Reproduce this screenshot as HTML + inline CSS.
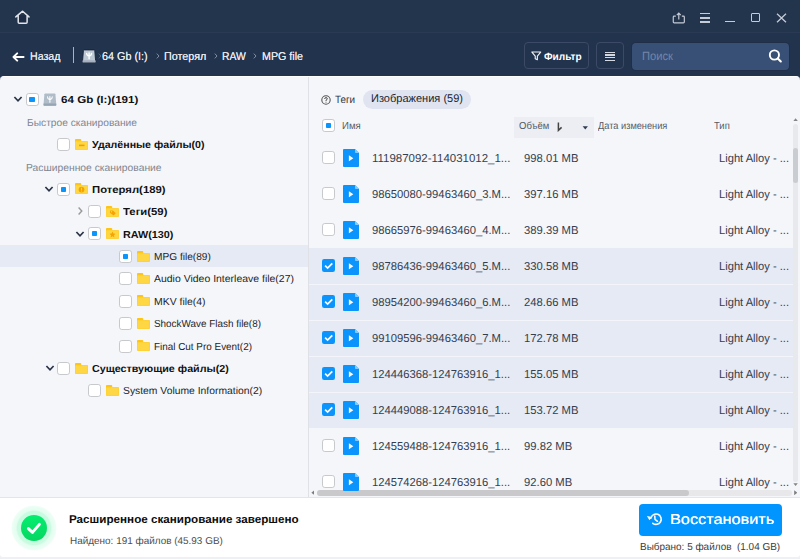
<!DOCTYPE html>
<html><head><meta charset="utf-8">
<style>
*{box-sizing:border-box;margin:0;padding:0}
html,body{width:800px;height:559px;overflow:hidden;background:#eff0f3;font-family:"Liberation Sans",sans-serif;}
.abs{position:absolute}
#app{position:absolute;left:0;top:0;width:800px;height:559px;overflow:hidden}
#dark{position:absolute;left:0;top:0;width:800px;height:120px;background:#22334d}
#title{position:absolute;left:0;top:0;width:800px;height:33px;background:#23344d;border-bottom:1px solid #2b3a54}
.t{position:absolute;white-space:pre;line-height:1;transform-origin:0 50%;text-rendering:geometricPrecision}
.b{font-weight:bold}
#panel{position:absolute;left:0;top:75.8px;width:800px;height:422px;background:#f5f6fa;border-radius:4px 4px 0 0;border-top:1.4px solid #fdfdfe}
#vdiv{position:absolute;left:308px;top:77px;width:1px;height:420px;background:#dfe1e6}
#bottom{position:absolute;left:0;top:497px;width:799.5px;height:60px;background:#fff;border-top:1px solid #e3e5e8;border-radius:0 0 3px 3px}
.cb{position:absolute;width:13px;height:13px;border:1.2px solid #c8c9cd;border-radius:2.8px;background:#fff}
.cb.p::after{content:"";position:absolute;left:2.8px;top:2.8px;width:5.2px;height:5.2px;background:#0b95fc;border-radius:0.8px}
.cb.c{background:#1890ff;border-color:#1890ff}
.cb.c::after{content:"";position:absolute;left:3.3px;top:0.2px;width:3.6px;height:7px;border:solid #fff;border-width:0 2px 2px 0;transform:rotate(43deg)}
.hl{position:absolute;background:#e6eaf4}
.btn{position:absolute;border:1.2px solid #3c4a67;border-radius:4px}
</style></head><body>
<div id="app">
<div id="dark"></div>
<div id="title"></div>

<!-- title bar icons -->
<svg class="abs" style="left:14px;top:9px" width="18" height="16" viewBox="0 0 18 16"><path d="M4.2 6.2 L4.2 13.3 Q4.2 14.3 5.2 14.3 L12.1 14.3 Q13.1 14.3 13.1 13.3 L13.1 6.2 Z" fill="#1d2b45"/><path d="M1.8 7.9 L8.65 2.2 L15 7.9 M4.2 6.4 L4.2 13.3 Q4.2 14.3 5.2 14.3 L12.1 14.3 Q13.1 14.3 13.1 13.3 L13.1 6.4" fill="none" stroke="#e1e4eb" stroke-width="1.5" stroke-linejoin="round" stroke-linecap="round"/></svg>
<svg class="abs" style="left:671.8px;top:12px" width="13.6" height="11.8" viewBox="0 0 15 13"><path d="M4.2 4.6 L2.4 4.6 Q1.4 4.6 1.4 5.6 L1.4 11 Q1.4 12 2.4 12 L12.6 12 Q13.6 12 13.6 11 L13.6 5.6 Q13.6 4.6 12.6 4.6 L10.8 4.6" fill="none" stroke="#c6ccd7" stroke-width="1.3"/><path d="M7.5 8.4 L7.5 1.4 M5.3 3.4 L7.5 1.1 L9.7 3.4" fill="none" stroke="#c6ccd7" stroke-width="1.3"/></svg>
<div class="abs" style="left:699.5px;top:12.8px;width:10px;height:1.5px;background:#c6ccd7"></div>
<div class="abs" style="left:699.5px;top:17px;width:10px;height:1.5px;background:#c6ccd7"></div>
<div class="abs" style="left:699.5px;top:21.3px;width:10px;height:1.5px;background:#c6ccd7"></div>
<div class="abs" style="left:725px;top:20.5px;width:10.3px;height:1.4px;background:#c6ccd7"></div>
<div class="abs" style="left:751.4px;top:13.2px;width:8.8px;height:8.7px;border:1.4px solid #c6ccd7;border-radius:1px"></div>
<svg class="abs" style="left:776px;top:13px" width="11" height="10" viewBox="0 0 11 10"><path d="M1 0.8 L10 9.2 M10 0.8 L1 9.2" stroke="#c6ccd7" stroke-width="1.3" fill="none"/></svg>

<!-- toolbar -->
<svg class="abs" style="left:11.5px;top:52px" width="13" height="10" viewBox="0 0 13 10"><path d="M11.6 5 L2 5 M5.2 1.3 L1.5 5 L5.2 8.7" fill="none" stroke="#fff" stroke-width="1.9" stroke-linecap="round" stroke-linejoin="round"/></svg>
<div class="abs" style="left:72.5px;top:47px;width:1.2px;height:15.5px;background:#aab1c0"></div>
<svg class="abs" style="left:97.5px;top:53px" width="4" height="6" viewBox="0 0 4 6"><path d="M0.8 0.6 L3 3 L0.8 5.4" fill="none" stroke="#5f6c85" stroke-width="0.9"/></svg>
<svg class="abs" style="left:155.6px;top:53px" width="4" height="6" viewBox="0 0 4 6"><path d="M0.8 0.6 L3 3 L0.8 5.4" fill="none" stroke="#8c97ad" stroke-width="0.9"/></svg>
<svg class="abs" style="left:214px;top:53px" width="4" height="6" viewBox="0 0 4 6"><path d="M0.8 0.6 L3 3 L0.8 5.4" fill="none" stroke="#8c97ad" stroke-width="0.9"/></svg>
<svg class="abs" style="left:253.4px;top:53px" width="4" height="6" viewBox="0 0 4 6"><path d="M0.8 0.6 L3 3 L0.8 5.4" fill="none" stroke="#8c97ad" stroke-width="0.9"/></svg>

<div class="btn" style="left:524px;top:42.3px;width:64.7px;height:26.9px"></div>
<svg class="abs" style="left:531px;top:50.5px" width="10.6" height="10" viewBox="0 0 12 11"><path d="M1 1 L11 1 L7.2 5.6 L7.2 9.8 L4.8 8.6 L4.8 5.6 Z" fill="none" stroke="#eef1f6" stroke-width="1.3" stroke-linejoin="round"/></svg>
<div class="btn" style="left:596.3px;top:42.3px;width:27.3px;height:26.9px"></div>
<div class="abs" style="left:605px;top:51.5px;width:10.2px;height:1.5px;background:#d3d8e1"></div>
<div class="abs" style="left:605px;top:54.2px;width:10.2px;height:1.5px;background:#d3d8e1"></div>
<div class="abs" style="left:605px;top:56.9px;width:10.2px;height:1.5px;background:#d3d8e1"></div>
<div class="abs" style="left:605px;top:59.6px;width:10.2px;height:1.5px;background:#d3d8e1"></div>
<div class="abs" style="left:632px;top:42.5px;width:157.4px;height:27px;background:#385075;border-radius:4px;box-shadow:0 0 0 1px #202e48"></div>
<svg class="abs" style="left:767px;top:48px" width="16" height="16" viewBox="0 0 16 16"><circle cx="7.4" cy="7" r="4.6" fill="none" stroke="#fff" stroke-width="1.9"/><path d="M10.8 10.4 L13.8 13.4" stroke="#fff" stroke-width="2.1" stroke-linecap="round"/></svg>

<div id="panel"></div>
<!-- highlights -->
<div class="hl" style="left:0;top:245px;width:308px;height:22px"></div>
<div class="hl" style="left:309px;top:248px;width:484px;height:180px"></div>
<div class="abs" style="left:309px;top:283.5px;width:484px;height:1px;background:#f3f5fa"></div>
<div class="abs" style="left:309px;top:319.5px;width:484px;height:1px;background:#f3f5fa"></div>
<div class="abs" style="left:309px;top:355.5px;width:484px;height:1px;background:#f3f5fa"></div>
<div class="abs" style="left:309px;top:391.5px;width:484px;height:1px;background:#f3f5fa"></div>
<div id="vdiv"></div>

<!-- tabs/header -->
<div class="abs" style="left:363px;top:89.5px;width:108px;height:19px;border-radius:9.5px;background:#e0e4f1"></div>
<svg class="abs" style="left:320.8px;top:94.9px" width="10" height="10" viewBox="0 0 10 10"><circle cx="5" cy="5" r="4.2" fill="none" stroke="#555" stroke-width="1.1"/><path d="M3.7 4 Q3.7 2.6 5 2.6 Q6.3 2.6 6.3 3.8 Q6.3 4.6 5 5.2 L5 6" fill="none" stroke="#4a4a4a" stroke-width="1"/><rect x="4.5" y="6.7" width="1" height="1" fill="#666"/></svg>
<div class="abs" style="left:514px;top:116.5px;width:80px;height:21.5px;background:#eceef3"></div>
<svg class="abs" style="left:556px;top:121px" width="8" height="11" viewBox="0 0 8 11"><path d="M2.4 1.4 L2.4 9.4 L5.6 6.4" fill="none" stroke="#444" stroke-width="1.5"/></svg>
<svg class="abs" style="left:582.2px;top:126.3px" width="6.6" height="3.6" viewBox="0 0 8 5"><path d="M0.3 0.4 L7.7 0.4 L4 4.8 Z" fill="#2f3c55"/></svg>

<!-- scrollbars -->
<div class="abs" style="left:793px;top:124px;width:5px;height:357.5px;background:#e8e9ec;border-radius:2.5px"></div>
<div class="abs" style="left:793px;top:148px;width:5px;height:35.2px;background:#c9ccd1;border-radius:2.5px"></div>
<svg class="abs" style="left:793px;top:117.6px" width="5.2" height="3.2" viewBox="0 0 6 4"><path d="M0.2 3.8 L3 0.3 L5.8 3.8 Z" fill="#858585"/></svg>
<svg class="abs" style="left:793px;top:483.4px" width="5.2" height="3.2" viewBox="0 0 6 4"><path d="M0.2 0.2 L3 3.7 L5.8 0.2 Z" fill="#858585"/></svg>
<div class="abs" style="left:309px;top:488.5px;width:490px;height:8.5px;background:#f5f6fa"></div>
<div class="abs" style="left:317px;top:489.5px;width:475px;height:6.5px;background:#e8e8ea;border-radius:3.2px"></div>
<div class="abs" style="left:317px;top:489.5px;width:372px;height:6.5px;background:#c9c9cb;border-radius:3.2px"></div>
<svg class="abs" style="left:310.6px;top:489.8px" width="3.6" height="5.4" viewBox="0 0 4 6"><path d="M3.8 0.2 L0.4 3 L3.8 5.8 Z" fill="#7d7d7d"/></svg>
<svg class="abs" style="left:793.8px;top:489.8px" width="3.6" height="5.4" viewBox="0 0 4 6"><path d="M0.2 0.2 L3.6 3 L0.2 5.8 Z" fill="#7d7d7d"/></svg>

<div id="bottom"></div>
<!-- bottom bar -->
<div class="abs" style="left:10.7px;top:505.2px;width:46px;height:46px;border-radius:50%;background:radial-gradient(circle,#c4fbde 0,#c9fbe1 16.6px,#e4fdf0 18px,#ecfef5 21.6px,rgba(255,255,255,0) 23px)"></div>
<div class="abs" style="left:20.9px;top:515.4px;width:25.8px;height:25.8px;border-radius:50%;background:linear-gradient(175deg,#04ee70,#06d661)"></div>
<svg class="abs" style="left:26px;top:520.8px" width="16" height="14" viewBox="0 0 16 14"><path d="M2.4 7.6 L6.5 11.4 L13.4 3.4" fill="none" stroke="#fff" stroke-width="2.9" stroke-linecap="round" stroke-linejoin="round"/></svg>
<div class="abs" style="left:639px;top:503.5px;width:143px;height:32.5px;border-radius:4px;background:#0095ff"></div>
<svg class="abs" style="left:646px;top:511px" width="18" height="16" viewBox="0 0 18 16"><path d="M4.91 7.12 A5.2 5.2 0 1 1 6.80 12.30" fill="none" stroke="#fff" stroke-width="1.6" stroke-linecap="round"/><path d="M0.9 5.0 L6 5.9 L3.4 9.2 Z" fill="#fff"/><path d="M8.8 4.9 L9 8.4 L11.5 10.3" fill="none" stroke="#fff" stroke-width="1.5" stroke-linecap="round" stroke-linejoin="round"/></svg>

<svg class="abs" style="left:13px;top:94.19999999999999px" width="10" height="10" viewBox="0 0 10 10"><path d="M1.4 3 L5 6.8 L8.6 3" fill="none" stroke="#2a3448" stroke-width="1.7"/></svg>
<div class="cb p" style="left:25.6px;top:93px"></div>
<svg class="abs" style="left:43.2px;top:93.1px" width="13.8" height="13.3" viewBox="-0.5 -0.5 14 13.4"><path d="M1.6 0 L11.4 0 Q12 0 12.1 0.6 L13 11.4 Q13 12.4 12.2 12.4 L0.8 12.4 Q0 12.4 0 11.4 L0.9 0.6 Q1 0 1.6 0 Z" fill="#b0bdc9" /><path d="M0.15 10.2 L12.85 10.2 L13 11.4 Q13 12.4 12.2 12.4 L0.8 12.4 Q0 12.4 0 11.4 Z" fill="#96a5b4"/><path d="M6.5 3 L6.5 8.8 M4.1 3.4 Q4.1 5.6 6.5 6.2 Q8.9 5.6 8.9 3.4" fill="none" stroke="#fff" stroke-width="1.1" stroke-linecap="round"/></svg>
<svg class="abs" style="left:82.4px;top:49.3px" width="14.2" height="14.4" viewBox="-0.5 -0.5 14 13.4"><path d="M1.6 0 L11.4 0 Q12 0 12.1 0.6 L13 11.4 Q13 12.4 12.2 12.4 L0.8 12.4 Q0 12.4 0 11.4 L0.9 0.6 Q1 0 1.6 0 Z" fill="#bcc8d3" stroke="#18213a" stroke-width="0.9"/><path d="M0.15 10.2 L12.85 10.2 L13 11.4 Q13 12.4 12.2 12.4 L0.8 12.4 Q0 12.4 0 11.4 Z" fill="#a4b1be"/><path d="M6.5 3 L6.5 8.8 M4.1 3.4 Q4.1 5.6 6.5 6.2 Q8.9 5.6 8.9 3.4" fill="none" stroke="#fff" stroke-width="1.35" stroke-linecap="round"/></svg>
<div class="cb " style="left:57px;top:138px"></div>
<svg class="abs" style="left:74.5px;top:138.59999999999997px" width="13" height="11" viewBox="0 0 13 11"><path d="M0 0.8 Q0 0 0.8 0 L5.4 0 Q6.1 0 6.2 0.7 L6.3 3 L0 3 Z" fill="#ffc416"/><rect x="0" y="2" width="13" height="9" rx="0.9" fill="#ffce2a"/><rect x="0.6" y="2.6" width="11.8" height="7.8" rx="0.5" fill="#ffd745"/><rect x="4" y="5.6" width="5.5" height="1.6" fill="#f0a000"/></svg>
<svg class="abs" style="left:44px;top:184.2px" width="10" height="10" viewBox="0 0 10 10"><path d="M1.4 3 L5 6.8 L8.6 3" fill="none" stroke="#2a3448" stroke-width="1.7"/></svg>
<div class="cb p" style="left:57px;top:183px"></div>
<svg class="abs" style="left:74.5px;top:183.39999999999998px" width="13" height="11" viewBox="0 0 13 11"><path d="M0 0.8 Q0 0 0.8 0 L5.4 0 Q6.1 0 6.2 0.7 L6.3 3 L0 3 Z" fill="#ffc416"/><rect x="0" y="2" width="13" height="9" rx="0.9" fill="#ffce2a"/><rect x="0.6" y="2.6" width="11.8" height="7.8" rx="0.5" fill="#ffd745"/><circle cx="6.5" cy="6.6" r="2.9" fill="#f5a300"/><rect x="6.1" y="4.8" width="0.9" height="2.3" fill="#ffd55e"/><rect x="6.1" y="7.6" width="0.9" height="0.9" fill="#ffd55e"/></svg>
<svg class="abs" style="left:75.3px;top:206.2px" width="10" height="10" viewBox="0 0 10 10"><path d="M3.6 1.6 L6.8 5 L3.6 8.4" fill="none" stroke="#999" stroke-width="1.4"/></svg>
<div class="cb " style="left:88px;top:205px"></div>
<svg class="abs" style="left:105.7px;top:205.79999999999998px" width="13" height="11" viewBox="0 0 13 11"><path d="M0 0.8 Q0 0 0.8 0 L5.4 0 Q6.1 0 6.2 0.7 L6.3 3 L0 3 Z" fill="#ffc416"/><rect x="0" y="2" width="13" height="9" rx="0.9" fill="#ffce2a"/><rect x="0.6" y="2.6" width="11.8" height="7.8" rx="0.5" fill="#ffd745"/><path d="M4 4.5 L7 4.5 L9.8 7.3 L7.6 9.5 L4 6.8 Z" fill="#f5a300"/><circle cx="5.5" cy="5.8" r="0.7" fill="#ffd55e"/></svg>
<svg class="abs" style="left:75.3px;top:228.99999999999997px" width="10" height="10" viewBox="0 0 10 10"><path d="M1.4 3 L5 6.8 L8.6 3" fill="none" stroke="#2a3448" stroke-width="1.7"/></svg>
<div class="cb p" style="left:88px;top:227px"></div>
<svg class="abs" style="left:105.7px;top:228.19999999999996px" width="13" height="11" viewBox="0 0 13 11"><path d="M0 0.8 Q0 0 0.8 0 L5.4 0 Q6.1 0 6.2 0.7 L6.3 3 L0 3 Z" fill="#ffc416"/><rect x="0" y="2" width="13" height="9" rx="0.9" fill="#ffce2a"/><rect x="0.6" y="2.6" width="11.8" height="7.8" rx="0.5" fill="#ffd745"/><path d="M6.5 3.6 L7.4 5.6 L9.6 5.8 L7.9 7.2 L8.5 9.4 L6.5 8.2 L4.5 9.4 L5.1 7.2 L3.4 5.8 L5.6 5.6 Z" fill="#f5a300"/></svg>
<div class="cb p" style="left:119px;top:250px"></div>
<svg class="abs" style="left:136.9px;top:250.59999999999997px" width="13" height="11" viewBox="0 0 13 11"><path d="M0 0.8 Q0 0 0.8 0 L5.4 0 Q6.1 0 6.2 0.7 L6.3 3 L0 3 Z" fill="#ffc416"/><rect x="0" y="2" width="13" height="9" rx="0.9" fill="#ffce2a"/><rect x="0.6" y="2.6" width="11.8" height="7.8" rx="0.5" fill="#ffd745"/></svg>
<div class="cb " style="left:119px;top:272px"></div>
<svg class="abs" style="left:136.9px;top:272.99999999999994px" width="13" height="11" viewBox="0 0 13 11"><path d="M0 0.8 Q0 0 0.8 0 L5.4 0 Q6.1 0 6.2 0.7 L6.3 3 L0 3 Z" fill="#ffc416"/><rect x="0" y="2" width="13" height="9" rx="0.9" fill="#ffce2a"/><rect x="0.6" y="2.6" width="11.8" height="7.8" rx="0.5" fill="#ffd745"/></svg>
<div class="cb " style="left:119px;top:295px"></div>
<svg class="abs" style="left:136.9px;top:295.4px" width="13" height="11" viewBox="0 0 13 11"><path d="M0 0.8 Q0 0 0.8 0 L5.4 0 Q6.1 0 6.2 0.7 L6.3 3 L0 3 Z" fill="#ffc416"/><rect x="0" y="2" width="13" height="9" rx="0.9" fill="#ffce2a"/><rect x="0.6" y="2.6" width="11.8" height="7.8" rx="0.5" fill="#ffd745"/></svg>
<div class="cb " style="left:119px;top:317px"></div>
<svg class="abs" style="left:136.9px;top:317.8px" width="13" height="11" viewBox="0 0 13 11"><path d="M0 0.8 Q0 0 0.8 0 L5.4 0 Q6.1 0 6.2 0.7 L6.3 3 L0 3 Z" fill="#ffc416"/><rect x="0" y="2" width="13" height="9" rx="0.9" fill="#ffce2a"/><rect x="0.6" y="2.6" width="11.8" height="7.8" rx="0.5" fill="#ffd745"/></svg>
<div class="cb " style="left:119px;top:340px"></div>
<svg class="abs" style="left:136.9px;top:340.2px" width="13" height="11" viewBox="0 0 13 11"><path d="M0 0.8 Q0 0 0.8 0 L5.4 0 Q6.1 0 6.2 0.7 L6.3 3 L0 3 Z" fill="#ffc416"/><rect x="0" y="2" width="13" height="9" rx="0.9" fill="#ffce2a"/><rect x="0.6" y="2.6" width="11.8" height="7.8" rx="0.5" fill="#ffd745"/></svg>
<svg class="abs" style="left:44.5px;top:363.4px" width="10" height="10" viewBox="0 0 10 10"><path d="M1.4 3 L5 6.8 L8.6 3" fill="none" stroke="#2a3448" stroke-width="1.7"/></svg>
<div class="cb " style="left:57px;top:362px"></div>
<svg class="abs" style="left:74.5px;top:362.59999999999997px" width="13" height="11" viewBox="0 0 13 11"><path d="M0 0.8 Q0 0 0.8 0 L5.4 0 Q6.1 0 6.2 0.7 L6.3 3 L0 3 Z" fill="#ffc416"/><rect x="0" y="2" width="13" height="9" rx="0.9" fill="#ffce2a"/><rect x="0.6" y="2.6" width="11.8" height="7.8" rx="0.5" fill="#ffd745"/></svg>
<div class="cb " style="left:88px;top:384px"></div>
<svg class="abs" style="left:106px;top:384.99999999999994px" width="13" height="11" viewBox="0 0 13 11"><path d="M0 0.8 Q0 0 0.8 0 L5.4 0 Q6.1 0 6.2 0.7 L6.3 3 L0 3 Z" fill="#ffc416"/><rect x="0" y="2" width="13" height="9" rx="0.9" fill="#ffce2a"/><rect x="0.6" y="2.6" width="11.8" height="7.8" rx="0.5" fill="#ffd745"/></svg>
<div class="cb " style="left:321.9px;top:151.25px"></div>
<svg class="abs" style="left:343px;top:149.2px" width="16" height="18" viewBox="0 0 16 18"><path d="M1 0 L12 0 L16 4 L16 17 Q16 18 15 18 L1 18 Q0 18 0 17 L0 1 Q0 0 1 0 Z" fill="#0b95fc"/><path d="M12 0 L16 4 L12.8 4 Q12 4 12 3.2 Z" fill="#86c9fe"/><path d="M5.9 6.3 L10.3 9.3 L5.9 12.3 Z" fill="#fff"/></svg>
<div class="cb " style="left:321.9px;top:187.25px"></div>
<svg class="abs" style="left:343px;top:185.2px" width="16" height="18" viewBox="0 0 16 18"><path d="M1 0 L12 0 L16 4 L16 17 Q16 18 15 18 L1 18 Q0 18 0 17 L0 1 Q0 0 1 0 Z" fill="#0b95fc"/><path d="M12 0 L16 4 L12.8 4 Q12 4 12 3.2 Z" fill="#86c9fe"/><path d="M5.9 6.3 L10.3 9.3 L5.9 12.3 Z" fill="#fff"/></svg>
<div class="cb " style="left:321.9px;top:223.25px"></div>
<svg class="abs" style="left:343px;top:221.2px" width="16" height="18" viewBox="0 0 16 18"><path d="M1 0 L12 0 L16 4 L16 17 Q16 18 15 18 L1 18 Q0 18 0 17 L0 1 Q0 0 1 0 Z" fill="#0b95fc"/><path d="M12 0 L16 4 L12.8 4 Q12 4 12 3.2 Z" fill="#86c9fe"/><path d="M5.9 6.3 L10.3 9.3 L5.9 12.3 Z" fill="#fff"/></svg>
<svg class="abs" style="left:321.9px;top:259.25px" width="13" height="13" viewBox="0 0 13 13"><rect x="0" y="0" width="13" height="13" rx="2.2" fill="#0b95fc"/><path d="M3.1 6.7 L5.6 9.1 L10.3 4.3" fill="none" stroke="#fff" stroke-width="1.7"/></svg>
<svg class="abs" style="left:343px;top:257.2px" width="16" height="18" viewBox="0 0 16 18"><path d="M1 0 L12 0 L16 4 L16 17 Q16 18 15 18 L1 18 Q0 18 0 17 L0 1 Q0 0 1 0 Z" fill="#0b95fc"/><path d="M12 0 L16 4 L12.8 4 Q12 4 12 3.2 Z" fill="#86c9fe"/><path d="M5.9 6.3 L10.3 9.3 L5.9 12.3 Z" fill="#fff"/></svg>
<svg class="abs" style="left:321.9px;top:295.25px" width="13" height="13" viewBox="0 0 13 13"><rect x="0" y="0" width="13" height="13" rx="2.2" fill="#0b95fc"/><path d="M3.1 6.7 L5.6 9.1 L10.3 4.3" fill="none" stroke="#fff" stroke-width="1.7"/></svg>
<svg class="abs" style="left:343px;top:293.2px" width="16" height="18" viewBox="0 0 16 18"><path d="M1 0 L12 0 L16 4 L16 17 Q16 18 15 18 L1 18 Q0 18 0 17 L0 1 Q0 0 1 0 Z" fill="#0b95fc"/><path d="M12 0 L16 4 L12.8 4 Q12 4 12 3.2 Z" fill="#86c9fe"/><path d="M5.9 6.3 L10.3 9.3 L5.9 12.3 Z" fill="#fff"/></svg>
<svg class="abs" style="left:321.9px;top:331.25px" width="13" height="13" viewBox="0 0 13 13"><rect x="0" y="0" width="13" height="13" rx="2.2" fill="#0b95fc"/><path d="M3.1 6.7 L5.6 9.1 L10.3 4.3" fill="none" stroke="#fff" stroke-width="1.7"/></svg>
<svg class="abs" style="left:343px;top:329.2px" width="16" height="18" viewBox="0 0 16 18"><path d="M1 0 L12 0 L16 4 L16 17 Q16 18 15 18 L1 18 Q0 18 0 17 L0 1 Q0 0 1 0 Z" fill="#0b95fc"/><path d="M12 0 L16 4 L12.8 4 Q12 4 12 3.2 Z" fill="#86c9fe"/><path d="M5.9 6.3 L10.3 9.3 L5.9 12.3 Z" fill="#fff"/></svg>
<svg class="abs" style="left:321.9px;top:367.25px" width="13" height="13" viewBox="0 0 13 13"><rect x="0" y="0" width="13" height="13" rx="2.2" fill="#0b95fc"/><path d="M3.1 6.7 L5.6 9.1 L10.3 4.3" fill="none" stroke="#fff" stroke-width="1.7"/></svg>
<svg class="abs" style="left:343px;top:365.2px" width="16" height="18" viewBox="0 0 16 18"><path d="M1 0 L12 0 L16 4 L16 17 Q16 18 15 18 L1 18 Q0 18 0 17 L0 1 Q0 0 1 0 Z" fill="#0b95fc"/><path d="M12 0 L16 4 L12.8 4 Q12 4 12 3.2 Z" fill="#86c9fe"/><path d="M5.9 6.3 L10.3 9.3 L5.9 12.3 Z" fill="#fff"/></svg>
<svg class="abs" style="left:321.9px;top:403.25px" width="13" height="13" viewBox="0 0 13 13"><rect x="0" y="0" width="13" height="13" rx="2.2" fill="#0b95fc"/><path d="M3.1 6.7 L5.6 9.1 L10.3 4.3" fill="none" stroke="#fff" stroke-width="1.7"/></svg>
<svg class="abs" style="left:343px;top:401.2px" width="16" height="18" viewBox="0 0 16 18"><path d="M1 0 L12 0 L16 4 L16 17 Q16 18 15 18 L1 18 Q0 18 0 17 L0 1 Q0 0 1 0 Z" fill="#0b95fc"/><path d="M12 0 L16 4 L12.8 4 Q12 4 12 3.2 Z" fill="#86c9fe"/><path d="M5.9 6.3 L10.3 9.3 L5.9 12.3 Z" fill="#fff"/></svg>
<div class="cb " style="left:321.9px;top:439.25px"></div>
<svg class="abs" style="left:343px;top:437.2px" width="16" height="18" viewBox="0 0 16 18"><path d="M1 0 L12 0 L16 4 L16 17 Q16 18 15 18 L1 18 Q0 18 0 17 L0 1 Q0 0 1 0 Z" fill="#0b95fc"/><path d="M12 0 L16 4 L12.8 4 Q12 4 12 3.2 Z" fill="#86c9fe"/><path d="M5.9 6.3 L10.3 9.3 L5.9 12.3 Z" fill="#fff"/></svg>
<div class="cb " style="left:321.9px;top:475.25px"></div>
<svg class="abs" style="left:343px;top:473.2px" width="16" height="18" viewBox="0 0 16 18"><path d="M1 0 L12 0 L16 4 L16 17 Q16 18 15 18 L1 18 Q0 18 0 17 L0 1 Q0 0 1 0 Z" fill="#0b95fc"/><path d="M12 0 L16 4 L12.8 4 Q12 4 12 3.2 Z" fill="#86c9fe"/><path d="M5.9 6.3 L10.3 9.3 L5.9 12.3 Z" fill="#fff"/></svg>
<div class="cb p" style="left:322.4px;top:119.3px"></div>
<span class="t" style="left:29.6px;top:52.0px;font-size:11.4px;color:#e4e8ef;transform:scaleX(0.931);text-shadow:0 0 0.3px #e4e8ef;">Назад</span>
<span class="t" style="left:102.0px;top:52.0px;font-size:11.4px;color:#e4e8ef;transform:scaleX(0.948);text-shadow:0 0 0.3px #e4e8ef;">64 Gb (I:)</span>
<span class="t" style="left:163.6px;top:52.0px;font-size:11.4px;color:#e4e8ef;transform:scaleX(0.946);text-shadow:0 0 0.3px #e4e8ef;">Потерял</span>
<span class="t" style="left:221.5px;top:52.0px;font-size:11.4px;color:#e4e8ef;transform:scaleX(0.910);text-shadow:0 0 0.3px #e4e8ef;">RAW</span>
<span class="t" style="left:261.5px;top:52.0px;font-size:11.4px;color:#e4e8ef;transform:scaleX(0.939);text-shadow:0 0 0.3px #e4e8ef;">MPG file</span>
<span class="t b" style="left:543.8px;top:53.0px;font-size:10.4px;color:#ffffff;transform:scaleX(0.970);">Фильтр</span>
<span class="t" style="left:641.5px;top:50.0px;font-size:12px;color:#7486a8;transform:scaleX(0.932);">Поиск</span>
<span class="t b" style="left:60.6px;top:96.0px;font-size:10.2px;color:#111;transform:scaleX(1.139);">64 Gb (I:)(191)</span>
<span class="t" style="left:27.0px;top:119.0px;font-size:10.2px;color:#80858f;transform:scaleX(1.003);">Быстрое сканирование</span>
<span class="t b" style="left:91.5px;top:141.0px;font-size:10.2px;color:#111;transform:scaleX(1.042);">Удалённые файлы(0)</span>
<span class="t" style="left:26.4px;top:164.0px;font-size:10.2px;color:#80858f;transform:scaleX(1.013);">Расширенное сканирование</span>
<span class="t b" style="left:91.5px;top:186.0px;font-size:10.2px;color:#111;transform:scaleX(1.110);">Потерял(189)</span>
<span class="t b" style="left:123.0px;top:208.0px;font-size:10.2px;color:#111;transform:scaleX(1.110);">Теги(59)</span>
<span class="t b" style="left:123.0px;top:231.0px;font-size:10.2px;color:#111;transform:scaleX(1.060);">RAW(130)</span>
<span class="t" style="left:153.8px;top:253.0px;font-size:10.2px;color:#1e1e1e;transform:scaleX(0.994);">MPG file(89)</span>
<span class="t" style="left:153.8px;top:275.0px;font-size:10.2px;color:#1e1e1e;transform:scaleX(1.027);">Audio Video Interleave file(27)</span>
<span class="t" style="left:153.8px;top:298.0px;font-size:10.2px;color:#1e1e1e;transform:scaleX(1.023);">MKV file(4)</span>
<span class="t" style="left:154.0px;top:320.0px;font-size:10.2px;color:#1e1e1e;transform:scaleX(0.972);">ShockWave Flash file(8)</span>
<span class="t" style="left:154.0px;top:343.0px;font-size:10.2px;color:#1e1e1e;transform:scaleX(0.972);">Final Cut Pro Event(2)</span>
<span class="t b" style="left:91.6px;top:365.0px;font-size:10.2px;color:#111;transform:scaleX(1.052);">Существующие файлы(2)</span>
<span class="t" style="left:122.8px;top:387.0px;font-size:10.2px;color:#1e1e1e;transform:scaleX(1.015);">System Volume Information(2)</span>
<span class="t" style="left:334.5px;top:95.0px;font-size:10.5px;color:#333;transform:scaleX(0.941);">Теги</span>
<span class="t" style="left:371.0px;top:94.0px;font-size:11.2px;color:#20252f;transform:scaleX(0.986);">Изображения (59)</span>
<span class="t" style="left:342.3px;top:122.0px;font-size:10.2px;color:#545a65;transform:scaleX(0.942);">Имя</span>
<span class="t" style="left:518.5px;top:122.0px;font-size:10.2px;color:#545a65;transform:scaleX(0.932);">Объём</span>
<span class="t" style="left:598.2px;top:122.0px;font-size:10.2px;color:#545a65;transform:scaleX(0.906);">Дата изменения</span>
<span class="t" style="left:713.8px;top:122.0px;font-size:10.2px;color:#545a65;transform:scaleX(0.927);">Тип</span>
<span class="t" style="left:372.2px;top:154.0px;font-size:11.5px;color:#343e4e;transform:scaleX(0.997);">111987092-114031012_1...</span>
<span class="t" style="left:523.7px;top:154.0px;font-size:11.5px;color:#343e4e;transform:scaleX(0.978);">998.01 MB</span>
<span class="t" style="left:719.4px;top:154.0px;font-size:11.5px;color:#343e4e;transform:scaleX(0.970);">Light Alloy - ...</span>
<span class="t" style="left:372.2px;top:190.0px;font-size:11.5px;color:#343e4e;transform:scaleX(0.979);">98650080-99463460_3.M...</span>
<span class="t" style="left:523.7px;top:190.0px;font-size:11.5px;color:#343e4e;transform:scaleX(0.978);">397.16 MB</span>
<span class="t" style="left:719.4px;top:190.0px;font-size:11.5px;color:#343e4e;transform:scaleX(0.970);">Light Alloy - ...</span>
<span class="t" style="left:372.2px;top:226.0px;font-size:11.5px;color:#343e4e;transform:scaleX(0.979);">98665976-99463460_4.M...</span>
<span class="t" style="left:523.7px;top:226.0px;font-size:11.5px;color:#343e4e;transform:scaleX(0.978);">389.39 MB</span>
<span class="t" style="left:719.4px;top:226.0px;font-size:11.5px;color:#343e4e;transform:scaleX(0.970);">Light Alloy - ...</span>
<span class="t" style="left:372.2px;top:262.0px;font-size:11.5px;color:#343e4e;transform:scaleX(0.979);">98786436-99463460_5.M...</span>
<span class="t" style="left:523.7px;top:262.0px;font-size:11.5px;color:#343e4e;transform:scaleX(0.978);">330.58 MB</span>
<span class="t" style="left:719.4px;top:262.0px;font-size:11.5px;color:#343e4e;transform:scaleX(0.970);">Light Alloy - ...</span>
<span class="t" style="left:372.2px;top:298.0px;font-size:11.5px;color:#343e4e;transform:scaleX(0.979);">98954200-99463460_6.M...</span>
<span class="t" style="left:523.7px;top:298.0px;font-size:11.5px;color:#343e4e;transform:scaleX(0.978);">248.66 MB</span>
<span class="t" style="left:719.4px;top:298.0px;font-size:11.5px;color:#343e4e;transform:scaleX(0.970);">Light Alloy - ...</span>
<span class="t" style="left:372.2px;top:334.0px;font-size:11.5px;color:#343e4e;transform:scaleX(0.979);">99109596-99463460_7.M...</span>
<span class="t" style="left:523.7px;top:334.0px;font-size:11.5px;color:#343e4e;transform:scaleX(0.978);">172.78 MB</span>
<span class="t" style="left:719.4px;top:334.0px;font-size:11.5px;color:#343e4e;transform:scaleX(0.970);">Light Alloy - ...</span>
<span class="t" style="left:372.2px;top:370.0px;font-size:11.5px;color:#343e4e;transform:scaleX(0.978);">124446368-124763916_1...</span>
<span class="t" style="left:523.7px;top:370.0px;font-size:11.5px;color:#343e4e;transform:scaleX(0.978);">155.05 MB</span>
<span class="t" style="left:719.4px;top:370.0px;font-size:11.5px;color:#343e4e;transform:scaleX(0.970);">Light Alloy - ...</span>
<span class="t" style="left:372.2px;top:406.0px;font-size:11.5px;color:#343e4e;transform:scaleX(0.978);">124449088-124763916_1...</span>
<span class="t" style="left:523.7px;top:406.0px;font-size:11.5px;color:#343e4e;transform:scaleX(0.978);">153.72 MB</span>
<span class="t" style="left:719.4px;top:406.0px;font-size:11.5px;color:#343e4e;transform:scaleX(0.970);">Light Alloy - ...</span>
<span class="t" style="left:372.2px;top:442.0px;font-size:11.5px;color:#343e4e;transform:scaleX(0.978);">124559488-124763916_1...</span>
<span class="t" style="left:523.7px;top:442.0px;font-size:11.5px;color:#343e4e;transform:scaleX(0.979);">99.82 MB</span>
<span class="t" style="left:719.4px;top:442.0px;font-size:11.5px;color:#343e4e;transform:scaleX(0.970);">Light Alloy - ...</span>
<span class="t" style="left:372.2px;top:478.0px;font-size:11.5px;color:#343e4e;transform:scaleX(0.978);">124574268-124763916_1...</span>
<span class="t" style="left:523.7px;top:478.0px;font-size:11.5px;color:#343e4e;transform:scaleX(0.979);">92.60 MB</span>
<span class="t" style="left:719.4px;top:478.0px;font-size:11.5px;color:#343e4e;transform:scaleX(0.970);">Light Alloy - ...</span>
<span class="t b" style="left:69.4px;top:515.0px;font-size:11.4px;color:#0c0c0c;transform:scaleX(1.023);">Расширенное сканирование завершено</span>
<span class="t" style="left:69.6px;top:537.0px;font-size:10px;color:#4e4e4e;transform:scaleX(0.994);">Найдено: 191 файлов (45.93 GB)</span>
<span class="t" style="left:669.8px;top:513.0px;font-size:14.4px;color:#ffffff;transform:scaleX(1.131);text-shadow:0 0 0.5px #fff;">Восстановить</span>
<span class="t" style="left:640.4px;top:543.0px;font-size:10.2px;color:#3c3c3c;transform:scaleX(0.977);">Выбрано: 5 файлов  (1.04 GB)</span>
</div>
</body></html>
